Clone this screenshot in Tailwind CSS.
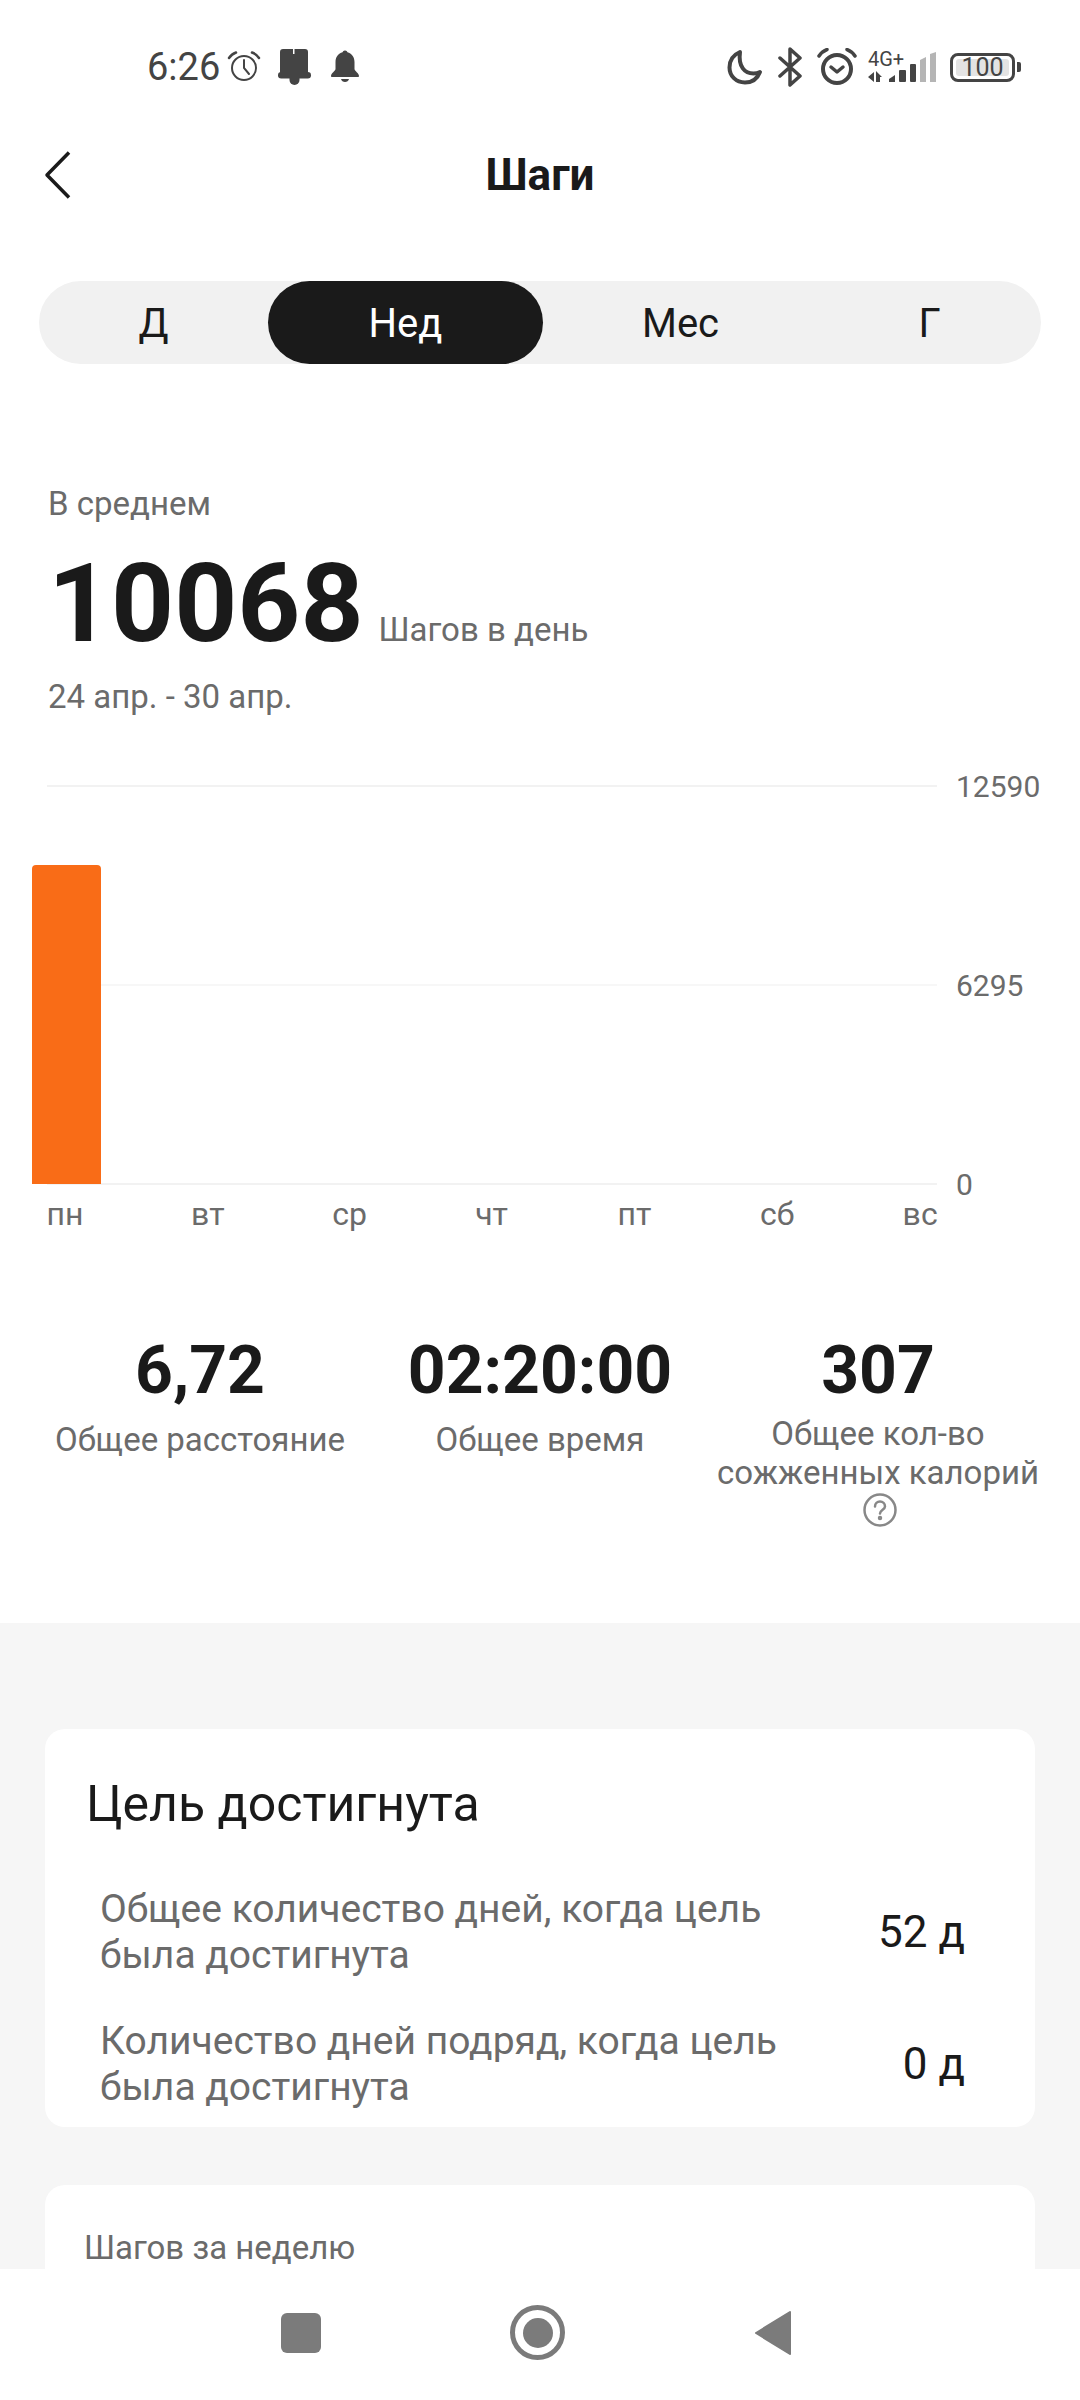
<!DOCTYPE html>
<html lang="ru">
<head>
    <meta charset="UTF-8">
    <meta name="viewport" content="width=device-width, initial-scale=1.0">
    <title>Шаги</title>
    <script src="https://cdn.jsdelivr.net/npm/@tailwindcss/browser@4"></script>
</head>
<body class="bg-white font-['Roboto',sans-serif] text-[#1a1a1a]">
<div class="relative w-[1080px] h-[2400px] overflow-hidden bg-white">

    <!-- Status bar -->
    <div class="h-[134px] flex items-center pl-[147px] text-[#444]">
        <span class="text-[38px] leading-none w-[71px] whitespace-nowrap">6:26</span>
        <svg class="ml-[9px]" width="34" height="34" viewBox="0 0 34 34" fill="none" stroke="#444" stroke-linecap="round">
            <circle cx="17" cy="18" r="12" stroke-width="2"/>
            <path d="M17 10v8l5 6" stroke-width="2"/>
            <path d="M2 8c2-3 4-4.500 7-5.500M32 8c-2-3-4-4.500-7-5.500" stroke-width="2.500"/>
        </svg>
        <svg class="ml-[17px]" width="34" height="36" viewBox="0 0 34 36" fill="#444">
            <path d="M5 0h10v5h1.500V0H27a3 3 0 0 1 3 3v21H2V3a3 3 0 0 1 3-3z"/>
            <rect x="0" y="23" width="33" height="6.500" rx="3.200"/>
            <path d="M11.500 29h10v2a5 5 0 0 1-10 0z"/>
        </svg>
        <svg class="ml-[18px]" width="30" height="34" viewBox="0 0 30 34" fill="#444">
            <circle cx="15" cy="3" r="2.500"/>
            <path d="M15 2c6 0 9.500 4.500 9.500 10v7c0 2 4.500 4 4.500 7 0 .8-.5 1-1 1H2c-.5 0-1-.2-1-1 0-3 4.500-5 4.500-7v-7C5.500 6.500 9 2 15 2z"/>
            <path d="M11 29h8c-.5 2-2 3-4 3s-3.500-1-4-3z"/>
        </svg>
        <div class="ml-auto flex items-center">
            <svg width="36" height="36" viewBox="0 0 36 36" fill="none" stroke="#444" stroke-width="4" stroke-linejoin="round">
                <path d="M13 3C6 6 2.500 12 2.500 18.500 2.500 27 9 33.500 18 33.500c7 0 12.500-4 15-10.500-2 1-4 1.500-6.500 1.500C18 24.500 11 18 13 3z"/>
            </svg>
            <svg class="ml-[15px]" width="24" height="40" viewBox="0 0 24 40" fill="none" stroke="#444" stroke-width="3.500" stroke-linecap="round" stroke-linejoin="round">
                <path d="M2 11l20 18-10 9V2l10 9L2 29"/>
            </svg>
            <svg class="ml-[15px]" width="40" height="38" viewBox="0 0 40 38" fill="none" stroke="#444" stroke-linecap="round" stroke-linejoin="round">
                <circle cx="20" cy="21" r="14" stroke-width="4"/>
                <path d="M14 19l6 5 6-5" stroke-width="3.500"/>
                <path d="M2 8c2-3 4-5 8-6.500M38 8c-2-3-4-5-8-6.500" stroke-width="3.500"/>
            </svg>
            <div class="relative ml-[11px] w-[68px] h-[31px]">
                <span class="absolute left-0 top-[-3px] text-[20px] leading-[20px] text-[#444]">4G+</span>
                <svg width="68" height="31" viewBox="0 0 68 31" fill="#444">
                    <path d="M0 25l6-5v10zM8 19l6 6h-2v5H8z"/>
                    <path d="M21 27l6-4v7h-6z"/>
                    <rect x="31" y="18" width="7" height="12" rx="1"/>
                    <rect x="42" y="12" width="6" height="18" rx="1"/>
                    <path d="M52 8l6-3v25h-6z" fill="#b5b5b5"/>
                    <path d="M62 2l6-2v30h-6z" fill="#b5b5b5"/>
                </svg>
            </div>
            <div class="ml-[14px] flex items-center">
                <div class="w-[65px] h-[29px] rounded-[8px] border-[3px] border-[#444] p-[3px] flex">
                    <span class="w-full rounded-[3px] bg-[#e3e3e3] text-center text-[25px] leading-[18px] text-[#444]">100</span>
                </div>
                <span class="ml-[2px] w-[4px] h-[10px] rounded-r-[2px] bg-[#444]"></span>
            </div>
            <span class="w-[59px]"></span>
        </div>
    </div>

    <!-- Header -->
    <div class="h-[82px] grid grid-cols-[1fr_auto_1fr] items-center">
        <svg class="ml-[44px]" width="28" height="48" viewBox="0 0 28 48" fill="none" stroke="#1a1a1a" stroke-width="3.500" stroke-linejoin="round">
            <path d="M25 1.500 3 24l22 22.500"/>
        </svg>
        <h1 class="text-[44px] leading-none font-bold">Шаги</h1>
    </div>

    <!-- Period switch -->
    <div class="mt-[65px] mx-[39px] h-[83px] flex rounded-full bg-[#f1f1f1] text-[40px]">
        <div class="w-[229px] pt-[3px] flex items-center justify-center">Д</div>
        <div class="w-[275px] pt-[3px] flex items-center justify-center rounded-full bg-[#1a1a1a] text-white">Нед</div>
        <div class="w-[275px] pt-[3px] flex items-center justify-center">Мес</div>
        <div class="w-[223px] pt-[3px] flex items-center justify-center">Г</div>
    </div>

    <!-- Average -->
    <div class="mt-[122px] pl-[48px]">
        <p class="text-[33px] leading-[36px] text-[#6b6b6b]">В среднем</p>
        <div class="mt-[27px] flex items-baseline h-[110px]">
            <span class="text-[110px] leading-[110px] font-bold">10068</span>
            <span class="ml-[15px] text-[33px] text-[#6b6b6b]">Шагов в день</span>
        </div>
        <p class="mt-[20px] text-[33px] leading-[36px] text-[#6b6b6b]">24 апр. - 30 апр.</p>
    </div>

    <!-- Chart -->
    <div class="relative mt-[70px] ml-[47px] h-[400px] flex flex-col justify-between">
        <div class="h-[2px] flex items-center">
            <div class="w-[890px] h-[2px] bg-[#f2f2f2]"></div>
            <span class="ml-[19px] text-[30px] text-[#6b6b6b]">12590</span>
        </div>
        <div class="h-[2px] flex items-center">
            <div class="w-[890px] h-[2px] bg-[#f7f7f7]"></div>
            <span class="ml-[19px] text-[30px] text-[#6b6b6b]">6295</span>
        </div>
        <div class="h-[2px] flex items-center">
            <div class="w-[890px] h-[2px] bg-[#f2f2f2]"></div>
            <span class="ml-[19px] text-[30px] text-[#6b6b6b]">0</span>
        </div>
        <div class="absolute left-[-15px] bottom-[1px] w-[69px] h-[319px] rounded-t-[4px] bg-[#f96c17]"></div>
    </div>
    <div class="mt-[11px] ml-[-5px] w-[1000px] grid grid-cols-7 text-center text-[32px] leading-[36px] text-[#6b6b6b] [&>span]:w-[142px]">
        <span class="ml-[-1px]">пн</span><span class="ml-[-1px]">вт</span><span class="ml-[-2px]">ср</span><span class="ml-[-3px]">чт</span><span class="ml-[-3px]">пт</span><span class="ml-[-3px]">сб</span><span class="ml-[-3px]">вс</span>
    </div>

    <!-- Totals -->
    <div class="mt-[100px] h-[291px] grid grid-cols-[320px_360px_316px] px-[40px] text-center">
        <div class="flex flex-col items-center">
            <span class="text-[66px] leading-[78px] font-bold">6,72</span>
            <span class="mt-[10px] text-[33px] leading-[39px] text-[#6b6b6b] whitespace-nowrap">Общее расстояние</span>
        </div>
        <div class="flex flex-col items-center">
            <span class="text-[66px] leading-[78px] font-bold whitespace-nowrap">02:20:00</span>
            <span class="mt-[10px] text-[33px] leading-[39px] text-[#6b6b6b]">Общее время</span>
        </div>
        <div class="flex flex-col items-center">
            <span class="text-[66px] leading-[78px] font-bold">307</span>
            <span class="mt-[4px] text-[33px] leading-[39px] text-[#6b6b6b] whitespace-nowrap">Общее кол-во<br>сожженных калорий</span>
            <svg class="mt-[1px] ml-[3px]" width="34" height="34" viewBox="0 0 34 34" fill="none" stroke="#888" stroke-width="2.500" stroke-linecap="round">
                <circle cx="17" cy="17" r="15.500"/>
                <path d="M12 13.500a5 5 0 0 1 10 0c0 3-5 3.500-5 7"/>
                <circle cx="17" cy="25" r="1" fill="#888"/>
            </svg>
        </div>
    </div>

    <!-- Lower section -->
    <div class="h-[778px] bg-[#f6f6f6] px-[45px] pt-[106px]">
        <div class="h-[398px] rounded-[20px] bg-white pl-[41px] pr-[70px] pt-[48px]">
            <h2 class="text-[50px] leading-[54px]">Цель достигнута</h2>
            <div class="mt-[55px] flex items-center justify-between pl-[14px]">
                <p class="text-[39px] leading-[46px] text-[#6b6b6b]">Общее количество дней, когда цель<br>была достигнута</p>
                <span class="text-[44px] text-[#1a1a1a]">52 д</span>
            </div>
            <div class="mt-[40px] flex items-center justify-between pl-[14px]">
                <p class="text-[39px] leading-[46px] text-[#6b6b6b]">Количество дней подряд, когда цель<br>была достигнута</p>
                <span class="text-[44px] text-[#1a1a1a]">0 д</span>
            </div>
        </div>
        <div class="mt-[58px] h-[200px] rounded-[20px] bg-white pl-[39px] pt-[43px]">
            <p class="text-[33px] leading-[40px] text-[#6b6b6b]">Шагов за неделю</p>
        </div>
    </div>

    <!-- Navigation bar -->
    <div class="absolute bottom-0 inset-x-0 h-[131px] bg-white flex items-center">
        <div class="ml-[281px] mt-[-4px] w-[40px] h-[40px] rounded-[6px] bg-[#7b7b7b]"></div>
        <div class="ml-[189px] mt-[-4px] w-[55px] h-[55px] rounded-full border-[5px] border-[#7b7b7b] flex items-center justify-center">
            <div class="w-[30px] h-[30px] rounded-full bg-[#7b7b7b]"></div>
        </div>
        <svg class="ml-[189px] mt-[-4px]" width="38" height="46" viewBox="0 0 38 46" fill="#7b7b7b" stroke="#7b7b7b" stroke-width="2" stroke-linejoin="round">
            <path d="M36 2 2 23l34 21z"/>
        </svg>
    </div>

</div>
</body>
</html>
